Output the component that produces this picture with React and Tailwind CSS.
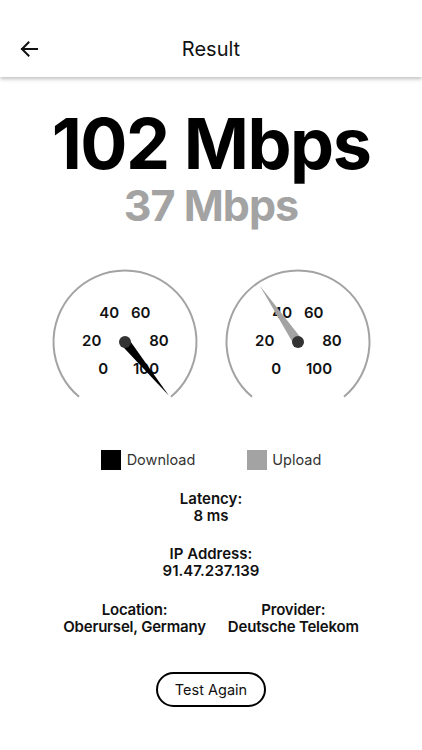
import React from "react";

function Gauge({ tip, color }) {
  const cx = 75, cy = 75, r = 71.5;
  const a = (40 * Math.PI) / 180;
  const sx = cx - r * Math.sin(a), sy = cy + r * Math.cos(a);
  const ex = cx + r * Math.sin(a);
  const dx = tip[0], dy = tip[1];
  const len = Math.hypot(dx, dy);
  const px = -dy / len, py = dx / len;
  const w = 4.8;
  const pts = `${cx + px * w},${cy + py * w} ${cx - px * w},${cy - py * w} ${cx + dx},${cy + dy}`;
  const labels = [
    ["40", -15.7, -29.2],
    ["60", 15.7, -29.2],
    ["20", -33.3, -1.8],
    ["80", 34, -1.8],
    ["0", -21.7, 26.8],
    ["100", 21, 26.8],
  ];
  return (
    <svg width="150" height="130" viewBox="0 0 150 130" overflow="visible">
      <path
        d={`M ${sx} ${sy} A ${r} ${r} 0 1 1 ${ex} ${sy}`}
        fill="none"
        stroke="#a3a3a3"
        strokeWidth="2"
      />
      {labels.map(([t, x, y]) => (
        <text
          key={t}
          x={cx + x}
          y={cy + y}
          textAnchor="middle"
          dominantBaseline="central"
          fontFamily="Inter, sans-serif"
          fontWeight="600"
          fontSize="15"
          fill="#111"
        >
          {t}
        </text>
      ))}
      <polygon points={pts} fill={color} />
      <circle cx={cx} cy={cy} r="6" fill="#333" />
    </svg>
  );
}

export default function App() {
  return (
    <div className="w-[422px] h-[750px] bg-white font-['Inter',sans-serif] text-[#111] flex flex-col items-center overflow-hidden">
      <div className="w-full h-[77px] shrink-0 flex items-center pt-[21px] px-5 shadow-[0_2px_4px_rgba(0,0,0,0.25)] bg-white">
        <svg width="18" height="16" viewBox="0 0 18 16" fill="none" stroke="#111" strokeWidth="2" strokeLinecap="square">
          <path d="M2 8 H17" />
          <path d="M8.5 1.5 L2 8 L8.5 14.5" />
        </svg>
        <div className="flex-1 text-center text-[20px] leading-none">Result</div>
        <div className="w-[18px]" />
      </div>

      <div className="mt-[32px] text-[70px] leading-none font-bold tracking-[-1.5px] text-black">102 Mbps</div>
      <div className="mt-[5px] text-[43px] leading-none font-bold tracking-[-1px] text-[#a3a3a3]">37 Mbps</div>

      <div className="mt-[40px] flex gap-[23px]">
        <Gauge tip={[43.8, 53.5]} color="#000" />
        <Gauge tip={[-38.3, -56.5]} color="#a3a3a3" />
      </div>

      <div className="mt-[53px] flex gap-[52px]">
        <div className="flex items-center gap-[6px]">
          <div className="w-5 h-5 bg-black" />
          <span className="text-[14.5px] leading-5 text-[#333]">Download</span>
        </div>
        <div className="flex items-center gap-[5px]">
          <div className="w-5 h-5 bg-[#a3a3a3]" />
          <span className="text-[14.5px] leading-5 text-[#333]">Upload</span>
        </div>
      </div>

      <div className="mt-[20px] text-center text-[15px] leading-[17px] font-semibold">
        <div>Latency:</div>
        <div>8 ms</div>
      </div>

      <div className="mt-[21px] text-center text-[15px] leading-[17px] font-semibold">
        <div>IP Address:</div>
        <div>91.47.237.139</div>
      </div>

      <div className="mt-[22px] flex gap-[22px] text-center text-[15px] leading-[17px] font-semibold tracking-[-0.2px]">
        <div>
          <div>Location:</div>
          <div>Oberursel, Germany</div>
        </div>
        <div>
          <div>Provider:</div>
          <div>Deutsche Telekom</div>
        </div>
      </div>

      <button className="mt-[37px] h-[35px] px-[17px] border-2 border-black rounded-full text-[14.5px] text-[#111] bg-white">
        Test Again
      </button>
    </div>
  );
}
